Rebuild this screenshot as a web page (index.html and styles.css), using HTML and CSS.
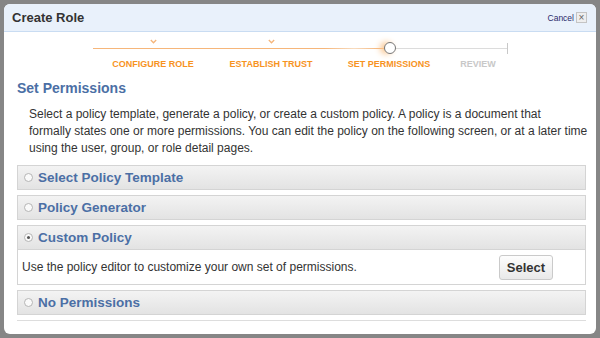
FILE: index.html
```html
<html>
<head>
<title>Create Role</title>
<meta http-equiv="Content-Type" content="text/html; charset=UTF-8" />
<link rel="stylesheet" href="styles.css">
</head>
<body>

<div id="dialog">
	<div id="dlg_head">
		<div class="dlg_title">Create Role</div>
		<div class="dlg_close">
			<a class="cancel_link">Cancel</a>
			<span class="close_box">&#215;</span>
		</div>
	</div>

	<!-- wizard progress -->
	<div id="steps">
		<div class="step_row">
			<span class="mark"><svg width="7" height="5" viewBox="0 0 7 5"><path d="M0.8 1 L3.5 3.8 L6.2 1" fill="none" stroke="#f5b57a" stroke-width="1.3"/></svg></span>
			<span class="mark"><svg width="7" height="5" viewBox="0 0 7 5"><path d="M0.8 1 L3.5 3.8 L6.2 1" fill="none" stroke="#f5b57a" stroke-width="1.3"/></svg></span>
			<span></span>
			<span></span>
		</div>
		<div class="track">
			<div class="track_done"></div>
			<div class="track_todo"></div>
			<div class="track_end"></div>
			<div class="track_dot"></div>
		</div>
		<div class="step_row labels">
			<span>CONFIGURE ROLE</span>
			<span>ESTABLISH TRUST</span>
			<span>SET PERMISSIONS</span>
			<span class="todo">REVIEW</span>
		</div>
	</div>

	<div id="content">
		<h2 class="section_title">Set Permissions</h2>
		<p class="intro">Select a policy template, generate a policy, or create a custom policy. A policy is a document that<br>
		formally states one or more permissions. You can edit the policy on the following screen, or at a later time using the user, group, or role detail pages.</p>

		<div class="panel">
			<div class="panel_head"><span class="radio"></span>Select Policy Template</div>
		</div>
		<div class="panel">
			<div class="panel_head"><span class="radio"></span>Policy Generator</div>
		</div>
		<div class="panel">
			<div class="panel_head"><span class="radio on"></span>Custom Policy</div>
			<div class="panel_body">
				<span>Use the policy editor to customize your own set of permissions.</span>
				<button class="btn">Select</button>
			</div>
		</div>
		<div class="panel">
			<div class="panel_head"><span class="radio"></span>No Permissions</div>
		</div>

		<div class="rule"></div>
	</div>
</div>

</body>
</html>
```

FILE: styles.css
```css
body {
	margin: 0px;
	padding: 4px;
	background: #868686;
	font-family: "Liberation Sans", Helvetica, Arial, sans-serif;
	color: #333;
}

#dialog {
	width: 592px;
	height: 330px;
	background: #fff;
	border-radius: 6px;
	overflow: hidden;
}

#dlg_head {
	height: 27px;
	background: #e9f1fb;
	border-bottom: 1px solid #c9dcf2;
	display: flex;
	align-items: center;
	justify-content: space-between;
	padding: 0px 9px 0px 8px;
}

.dlg_title {
	font-size: 13px;
	font-weight: bold;
	color: #333;
}

.dlg_close {
	display: flex;
	align-items: center;
	gap: 2px;
}

.cancel_link {
	font-size: 8.5px;
	color: #2b2b6b;
}

.close_box {
	width: 9px;
	height: 9px;
	border: 1px solid #c4c4c4;
	background: #eee;
	font-size: 10px;
	line-height: 9px;
	text-align: center;
	color: #666;
}

#steps {
	padding-top: 7px;
}

.step_row {
	display: grid;
	grid-template-columns: 118px 118px 118px 60px;
	margin-left: 90px;
	text-align: center;
}

.mark {
	height: 8px;
	line-height: 8px;
}

.track {
	position: relative;
	display: flex;
	align-items: flex-end;
	margin-left: 89px;
	margin-top: 1px;
	width: 415px;
	height: 1px;
}

.track_done {
	width: 297px;
	height: 1px;
	background: linear-gradient(to right, #f6b67a 0%, #f6b67a 78%, #f7dcc0 88%, #f4a35a 100%);
}

.track_todo {
	width: 117px;
	height: 1px;
	background: #dcdcdc;
}

.track_end {
	width: 1px;
	height: 11px;
	margin-bottom: -5px;
	background: #c8c8c8;
}

.track_dot {
	position: absolute;
	left: 291px;
	top: -6px;
	width: 10px;
	height: 10px;
	border: 1.5px solid #777;
	border-radius: 50%;
	background: #fff;
	box-shadow: -4px 0px 6px #f9c690;
}

.labels {
	margin-top: 10px;
	font-size: 9px;
	line-height: 11px;
	font-weight: bold;
	color: #f7931e;
}

.labels .todo {
	color: #c8c8c8;
}

#content {
	padding: 0px 10px 0px 13px;
}

.section_title {
	margin: 10px 0px 0px 0px;
	font-size: 14px;
	line-height: 17px;
	color: #4b6fa5;
}

.intro {
	margin: 9px -6px 8px 12px;
	font-size: 12px;
	line-height: 17px;
	color: #333;
}

.panel {
	border: 1px solid #d4d4d4;
	margin-bottom: 5px;
}

.panel_head {
	height: 23px;
	display: flex;
	align-items: center;
	padding-left: 6px;
	background: linear-gradient(to bottom, #f3f3f3, #e3e3e3);
	font-size: 13.5px;
	font-weight: bold;
	color: #4b6fa5;
}

.radio {
	width: 7px;
	height: 7px;
	border: 1px solid #b5b5b5;
	border-radius: 50%;
	background: #fafafa;
	margin-right: 5px;
	position: relative;
}

.radio.on::after {
	content: "";
	position: absolute;
	left: 2px;
	top: 2px;
	width: 3px;
	height: 3px;
	border-radius: 50%;
	background: #555;
}

.panel_body {
	display: flex;
	align-items: center;
	justify-content: space-between;
	height: 34px;
	padding: 0px 32px 0px 4px;
	border-top: 1px solid #d4d4d4;
	font-size: 12px;
	color: #333;
}

.btn {
	width: 54px;
	height: 25px;
	border: 1px solid #cacaca;
	border-radius: 3px;
	background: linear-gradient(to bottom, #fdfdfd, #e9e9e9);
	font-family: "Liberation Sans", Helvetica, Arial, sans-serif;
	font-size: 13px;
	font-weight: bold;
	color: #333;
	padding: 0px;
}

.rule {
	margin-top: 1px;
	height: 1px;
	background: #ddd;
}
```
